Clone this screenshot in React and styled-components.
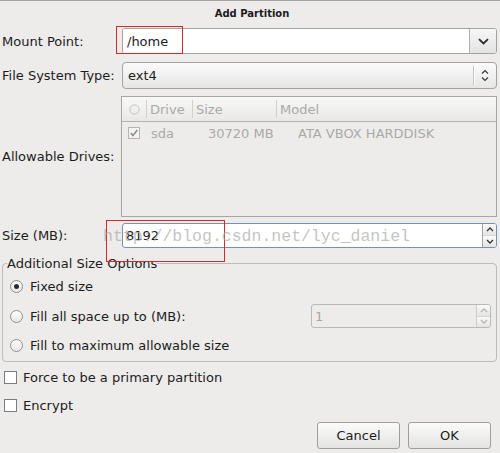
import React from 'react';
import styled, { createGlobalStyle } from 'styled-components';

const GlobalStyle = createGlobalStyle`
  html, body {
    margin: 0;
    padding: 0;
    background: #edeceb;
  }
  * {
    box-sizing: border-box;
  }
`;

const Window = styled.div`
  position: relative;
  width: 500px;
  height: 453px;
  overflow: hidden;
  background: #edeceb;
  border-top: 1px solid #a4a4a4;
  font-family: "DejaVu Sans", "Liberation Sans", sans-serif;
  font-size: 13px;
  color: #1c1c1c;
`;

const Title = styled.div`
  height: 24px;
  line-height: 26px;
  text-align: center;
  font-size: 10px;
  font-weight: bold;
  padding-left: 4px;
`;

const Form = styled.div`
  display: flex;
  flex-direction: column;
  padding: 0 3px 0 2px;
`;

const FieldRow = styled.div`
  display: grid;
  grid-template-columns: 120px 1fr;
  align-items: center;
  height: ${(p) => p.$h}px;
  margin-top: ${(p) => p.$mt}px;
`;

const Label = styled.span`
  white-space: nowrap;
`;

const Combo = styled.div`
  display: flex;
  height: 100%;
  border: 1px solid #a3a3a3;
  border-radius: 3px;
  overflow: hidden;
  background: #fff;
`;

const ComboEntry = styled.div`
  flex: 1;
  display: flex;
  align-items: center;
  padding-left: 4px;
  background: #fff;
`;

const ComboArrow = styled.div`
  width: 27px;
  display: flex;
  align-items: center;
  justify-content: center;
  border-left: 1px solid #b0b0b0;
  background: linear-gradient(#f7f7f7, #e3e3e3);
`;

const SelectBox = styled.div`
  display: flex;
  align-items: center;
  height: 100%;
  border: 1px solid #a3a3a3;
  border-radius: 4px;
  background: linear-gradient(#fbfbfb, #e6e6e5);
  padding-left: 5px;
`;

const SelectText = styled.span`
  flex: 1;
`;

const SelectSep = styled.div`
  width: 1px;
  height: 19px;
  background: #c4c4c4;
  box-shadow: 1px 0 0 #fff;
`;

const SelectArrows = styled.div`
  width: 22px;
  display: flex;
  align-items: center;
  justify-content: center;
`;

const Table = styled.div`
  height: 100%;
  margin-left: -1px;
  border: 1px solid #a6a6a6;
  background: #edeceb;
  color: #a9a9a9;
`;

const TableHeader = styled.div`
  display: grid;
  grid-template-columns: 24px 46px 84px 1fr;
  height: 25px;
  border-bottom: 1px solid #b3b3b3;
  background: linear-gradient(#f8f8f7, #e9e8e7);
`;

const HeadCell = styled.div`
  display: flex;
  align-items: center;
  padding-left: ${(p) => (p.$first ? 7 : 3)}px;
  border-left: ${(p) => (p.$first ? 'none' : '1px solid #d0d0d0')};
  margin: 3px 0;
`;

const TableRow = styled.div`
  display: grid;
  grid-template-columns: 23px 57px 90px 1fr;
  align-items: center;
  height: 22px;
  padding-left: 6px;
`;

const SpinBox = styled.div`
  display: flex;
  height: 100%;
  border: 1px solid ${(p) => (p.$focus ? '#7591b8' : '#b9b9b9')};
  border-radius: 3px;
  overflow: hidden;
  background: ${(p) => (p.$disabled ? '#edeceb' : '#fff')};
  color: ${(p) => (p.$disabled ? '#a6a6a6' : '#1c1c1c')};
`;

const SpinEntry = styled.div`
  flex: 1;
  display: flex;
  align-items: center;
  padding-left: 3px;
`;

const SpinButtons = styled.div`
  width: 14px;
  display: flex;
  flex-direction: column;
  border-left: 1px solid ${(p) => (p.$disabled ? '#cccccc' : '#a3a3a3')};
`;

const SpinHalf = styled.div`
  flex: 1;
  display: flex;
  align-items: center;
  justify-content: center;
  background: linear-gradient(#fafafa, #e4e4e4);
  & + & {
    border-top: 1px solid ${(p) => (p.$disabled ? '#d6d6d6' : '#b6b6b6')};
  }
`;

const Frame = styled.fieldset`
  margin: 8px 0 0 0;
  padding: 0 0 1px 0;
  border: 1px solid #bdbcbb;
  border-radius: 4px;
  min-width: 0;
`;

const Legend = styled.legend`
  margin-left: 4px;
  padding: 0;
  line-height: 15px;
`;

const RadioRow = styled.div`
  display: flex;
  align-items: center;
  height: ${(p) => p.$h || 30}px;
  padding: 0 5px 0 7px;
  gap: 7px;
`;

const Radio = styled.span`
  position: relative;
  width: 13px;
  height: 13px;
  flex-shrink: 0;
  border: 1px solid #8e8e8e;
  border-radius: 50%;
  background: linear-gradient(#ffffff, #e8e8e8);
  &::after {
    content: '';
    display: ${(p) => (p.$checked ? 'block' : 'none')};
    position: absolute;
    left: 3px;
    top: 3px;
    width: 5px;
    height: 5px;
    border-radius: 50%;
    background: #2d2d2d;
  }
`;

const SmallSpin = styled.div`
  margin-left: auto;
  width: 180px;
  height: 24px;
`;

const CheckRow = styled.div`
  display: flex;
  align-items: center;
  height: 28px;
  padding-left: 2px;
  gap: 6px;
  margin-top: ${(p) => p.$mt || 0}px;
`;

const CheckBox = styled.span`
  width: 13px;
  height: 13px;
  flex-shrink: 0;
  border: 1px solid #7d7d7d;
  background: #fff;
`;

const ButtonBar = styled.div`
  display: flex;
  justify-content: flex-end;
  gap: 8px;
  margin: 3px 6px 0 0;
`;

const Button = styled.button`
  width: 83px;
  height: 27px;
  border: 1px solid #9e9e9e;
  border-radius: 3px;
  background: linear-gradient(#fbfbfb, #e3e3e2);
  font-family: "DejaVu Sans", "Liberation Sans", sans-serif;
  font-size: 13px;
  color: #1c1c1c;
  padding: 0;
`;

const Annotation = styled.div`
  position: absolute;
  border: 1px solid #d02a2a;
  pointer-events: none;
`;

const Watermark = styled.div`
  position: absolute;
  left: 103px;
  top: 226px;
  font-family: "Liberation Mono", "DejaVu Sans Mono", monospace;
  font-size: 16.5px;
  line-height: 20px;
  color: rgba(175, 175, 175, 0.75);
  white-space: nowrap;
  pointer-events: none;
`;

const ChevronDown = () => (
  <svg width="11" height="7" viewBox="0 0 11 7">
    <path d="M1 1.2 L5.5 5.5 L10 1.2" fill="none" stroke="#2c2c2c" strokeWidth="1.8" />
  </svg>
);

const UpDown = () => (
  <svg width="8" height="13" viewBox="0 0 8 13">
    <path d="M1 4.5 L4 1.5 L7 4.5 M1 8.5 L4 11.5 L7 8.5" fill="none" stroke="#3a3a3a" strokeWidth="1.2" />
  </svg>
);

const Arrow = ({ up, color }) => (
  <svg width="8" height="5" viewBox="0 0 8 5">
    <path d={up ? 'M1 4 L4 1 L7 4' : 'M1 1 L4 4 L7 1'} fill="none" stroke={color} strokeWidth="1.3" />
  </svg>
);

const HeadCircle = () => (
  <svg width="11" height="11" viewBox="0 0 11 11">
    <circle cx="5.5" cy="5.5" r="4.6" fill="none" stroke="#c2c2c2" strokeWidth="1" />
  </svg>
);

const GreyCheck = () => (
  <svg width="12" height="12" viewBox="0 0 12 12">
    <rect x="0.5" y="0.5" width="11" height="11" fill="#f4f4f4" stroke="#b4b4b4" />
    <path d="M2.8 6 L5 8.5 L9.3 3" fill="none" stroke="#8e8e8e" strokeWidth="1.6" />
  </svg>
);

const Spinner = ({ value, focus, disabled }) => (
  <SpinBox $focus={focus} $disabled={disabled}>
    <SpinEntry>{value}</SpinEntry>
    <SpinButtons $disabled={disabled}>
      <SpinHalf $disabled={disabled}>
        <Arrow up color={disabled ? '#b5b5b5' : '#333'} />
      </SpinHalf>
      <SpinHalf $disabled={disabled}>
        <Arrow color={disabled ? '#b5b5b5' : '#333'} />
      </SpinHalf>
    </SpinButtons>
  </SpinBox>
);

export default function App() {
  return (
    <>
      <GlobalStyle />
      <Window>
        <Title>Add Partition</Title>
        <Form>
          <FieldRow $h={26} $mt={3}>
            <Label>Mount Point:</Label>
            <Combo>
              <ComboEntry>/home</ComboEntry>
              <ComboArrow>
                <ChevronDown />
              </ComboArrow>
            </Combo>
          </FieldRow>

          <FieldRow $h={27} $mt={8}>
            <Label>File System Type:</Label>
            <SelectBox>
              <SelectText>ext4</SelectText>
              <SelectSep />
              <SelectArrows>
                <UpDown />
              </SelectArrows>
            </SelectBox>
          </FieldRow>

          <FieldRow $h={121} $mt={7}>
            <Label>Allowable Drives:</Label>
            <Table>
              <TableHeader>
                <HeadCell $first>
                  <HeadCircle />
                </HeadCell>
                <HeadCell>Drive</HeadCell>
                <HeadCell>Size</HeadCell>
                <HeadCell>Model</HeadCell>
              </TableHeader>
              <TableRow>
                <GreyCheck />
                <span>sda</span>
                <span>30720 MB</span>
                <span>ATA VBOX HARDDISK</span>
              </TableRow>
            </Table>
          </FieldRow>

          <FieldRow $h={25} $mt={6}>
            <Label>Size (MB):</Label>
            <Spinner value="8192" focus />
          </FieldRow>

          <Frame>
            <Legend>Additional Size Options</Legend>
            <RadioRow>
              <Radio $checked />
              <span>Fixed size</span>
            </RadioRow>
            <RadioRow>
              <Radio />
              <span>Fill all space up to (MB):</span>
              <SmallSpin>
                <Spinner value="1" disabled />
              </SmallSpin>
            </RadioRow>
            <RadioRow $h={29}>
              <Radio />
              <span>Fill to maximum allowable size</span>
            </RadioRow>
          </Frame>

          <CheckRow $mt={1}>
            <CheckBox />
            <span>Force to be a primary partition</span>
          </CheckRow>
          <CheckRow>
            <CheckBox />
            <span>Encrypt</span>
          </CheckRow>

          <ButtonBar>
            <Button>Cancel</Button>
            <Button>OK</Button>
          </ButtonBar>
        </Form>

        <Annotation style={{ left: 116, top: 25, width: 67, height: 28 }} />
        <Annotation style={{ left: 106, top: 219, width: 119, height: 42 }} />
        <Watermark>http://blog.csdn.net/lyc_daniel</Watermark>
      </Window>
    </>
  );
}
